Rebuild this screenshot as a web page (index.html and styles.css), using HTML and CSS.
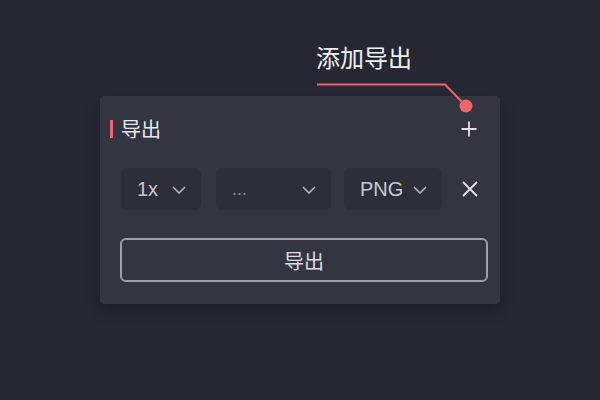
FILE: index.html
```html
<!DOCTYPE html>
<html>
<head>
<meta charset="utf-8">
<link rel="stylesheet" href="styles.css">
</head>
<body>
<div class="panel">
  <div class="header">
    <span class="mark"></span>
    <span class="title">导出</span>
    <svg class="plus" width="16" height="16" viewBox="0 0 16 16"><path d="M8 0.5V15.5M0.5 8H15.5" stroke="#e2e3e8" stroke-width="1.8" fill="none"/></svg>
  </div>
  <div class="row">
    <div class="select s1"><span class="val">1x</span><svg class="chev" width="14" height="8" viewBox="0 0 14 8"><path d="M1 1L7 7L13 1" stroke="#b4b6be" stroke-width="1.6" fill="none"/></svg></div>
    <div class="select s2"><span class="val dots">...</span><svg class="chev" width="14" height="8" viewBox="0 0 14 8"><path d="M1 1L7 7L13 1" stroke="#b4b6be" stroke-width="1.6" fill="none"/></svg></div>
    <div class="select s3"><span class="val">PNG</span><svg class="chev" width="14" height="8" viewBox="0 0 14 8"><path d="M1 1L7 7L13 1" stroke="#b4b6be" stroke-width="1.6" fill="none"/></svg></div>
    <svg class="close" width="16" height="16" viewBox="0 0 16 16"><path d="M1 1L15 15M15 1L1 15" stroke="#e2e3e8" stroke-width="1.8" fill="none"/></svg>
  </div>
  <div class="btn">导出</div>
</div>
<div class="note">添加导出</div>
<svg class="callout" width="600" height="400" viewBox="0 0 600 400">
  <path d="M317 84.5H445L466 106" stroke="#f2636b" stroke-width="2" fill="none"/>
  <circle cx="466" cy="106" r="6.5" fill="#f2636b"/>
</svg>
</body>
</html>
```
FILE: styles.css
```css
html, body {
  margin: 0;
  padding: 0;
}
body {
  width: 600px;
  height: 400px;
  background: #252733;
  font-family: "Noto Sans CJK SC", "Liberation Sans", sans-serif;
  position: relative;
  overflow: hidden;
  padding-top: 96px;
  box-sizing: border-box;
}
.panel {
  margin-left: 100px;
  width: 400px;
  height: 208px;
  background: #333541;
  border-radius: 4px;
  box-shadow: 0 6px 14px rgba(0, 0, 0, 0.25);
  box-sizing: border-box;
  padding-top: 20px;
}
.header {
  height: 26px;
  display: flex;
  align-items: center;
  padding-left: 10px;
  padding-right: 22px;
}
.mark {
  width: 3px;
  height: 18px;
  background: #f2636b;
  margin-right: 8px;
}
.title {
  font-size: 20px;
  color: #e8e9ee;
  line-height: 26px;
  flex: 1;
}
.plus {
  display: block;
  margin-right: 1px;
}
.row {
  margin-top: 26px;
  height: 42px;
  display: flex;
  align-items: center;
  padding-left: 21px;
}
.select {
  height: 42px;
  background: #2c2e39;
  border-radius: 6px;
  display: flex;
  align-items: center;
  justify-content: space-between;
  padding: 0 15px 0 16px;
  box-sizing: border-box;
}
.s1 { width: 80px; }
.s2 { width: 115px; margin-left: 15px; }
.s3 { width: 98px; margin-left: 13px; }
.val {
  font-family: "Liberation Sans", "Noto Sans CJK SC", sans-serif;
  font-size: 20px;
  color: #c9cad2;
  line-height: 42px;
}
.dots {
  color: #8e909a;
  font-size: 18px;
}
.chev {
  display: block;
  margin-top: 2px;
}
.close {
  display: block;
  margin-left: 20px;
}
.btn {
  margin: 28px 0 0 20px;
  width: 368px;
  height: 44px;
  border: 2px solid #9e9fa8;
  border-radius: 6px;
  box-sizing: border-box;
  display: flex;
  align-items: center;
  justify-content: center;
  font-size: 20px;
  color: #dcdde3;
}
.note {
  position: absolute;
  left: 316px;
  top: 40px;
  font-size: 24px;
  line-height: 34px;
  color: #f2f2f4;
}
.callout {
  position: absolute;
  left: 0;
  top: 0;
}
```
